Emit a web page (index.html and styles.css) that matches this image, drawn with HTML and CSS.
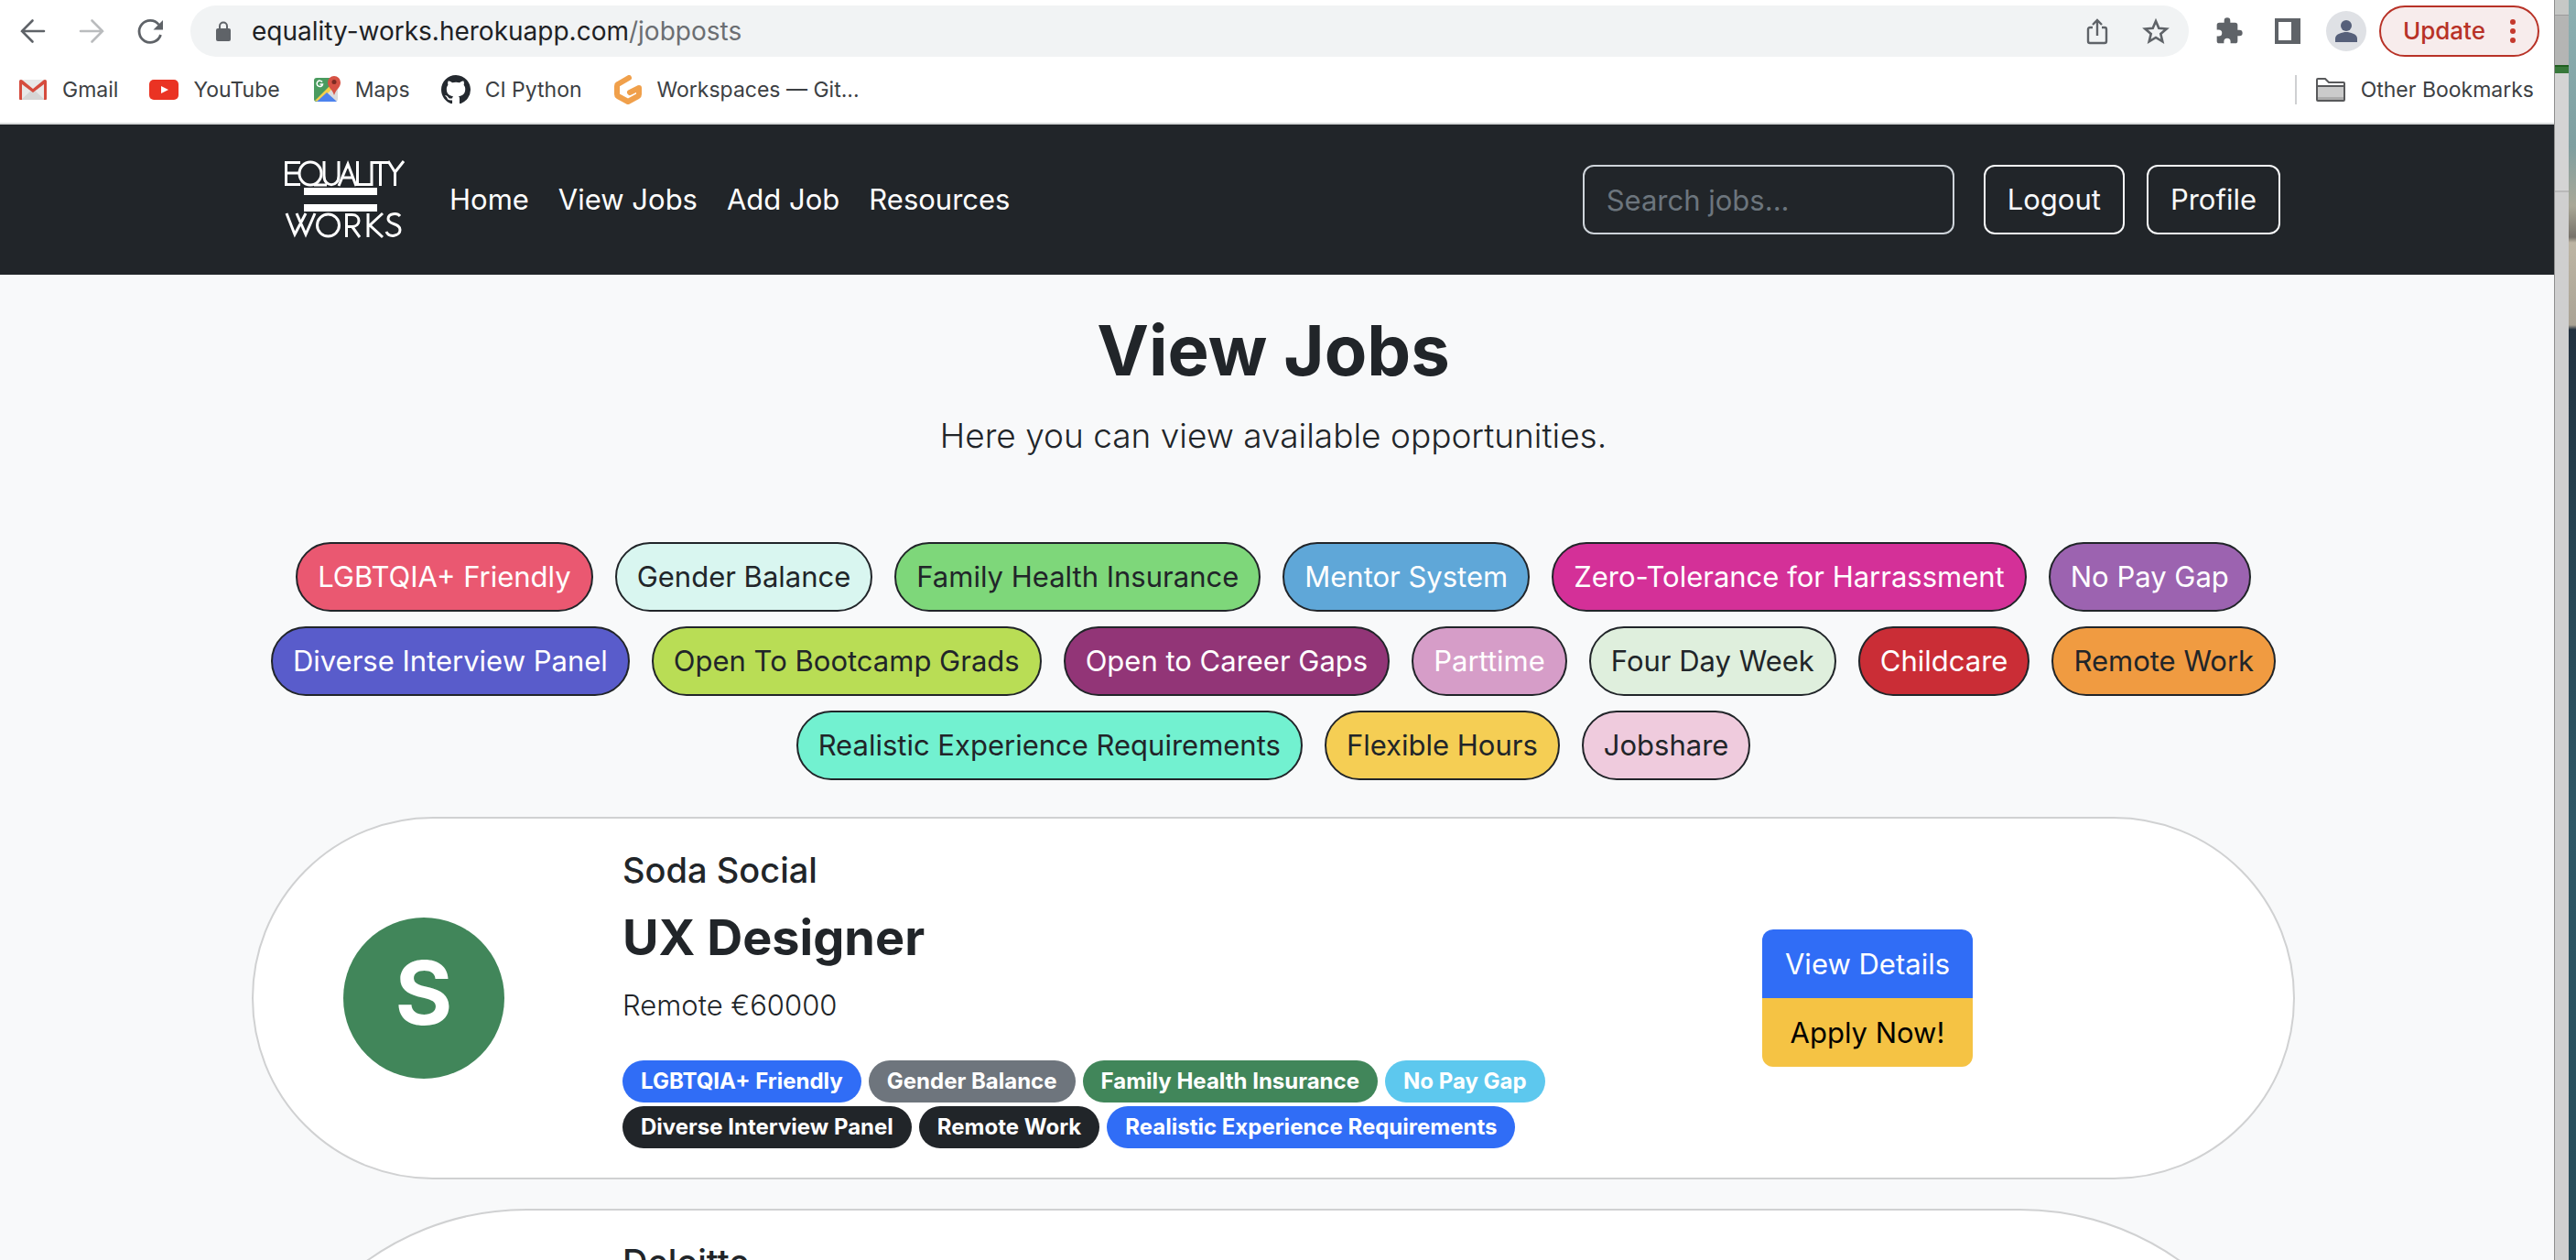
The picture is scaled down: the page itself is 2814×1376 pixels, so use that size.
FILE: index.html
```html
<!DOCTYPE html>
<html lang="en">
<head>
<meta charset="utf-8">
<title>Equality Works</title>
<link rel="stylesheet" href="styles.css">
</head>
<body>
<div class="desktop">
<div class="window">
  <div class="browser">
    <div class="toolbar">
      <div class="history">
        <button class="tool" aria-label="Back"><svg width="32" height="32" viewBox="0 0 32 32" fill="none" stroke="#5f6368" stroke-width="2.600" stroke-linecap="round"><path d="M28 16H4M15.500 4.500 4 16l11.500 11.500"/></svg></button>
        <button class="tool" aria-label="Forward"><svg width="32" height="32" viewBox="0 0 32 32" fill="none" stroke="#babcbe" stroke-width="2.600" stroke-linecap="round"><path d="M4 16h24M16.500 4.500 28 16 16.500 27.500"/></svg></button>
        <button class="tool" aria-label="Reload"><svg width="32" height="32" viewBox="0 0 32 32"><path d="M25.500 9a12 12 0 1 0 2 11" fill="none" stroke="#5f6368" stroke-width="2.800"/><path d="M30 4v10.500H19.500z" fill="#5f6368"/></svg></button>
      </div>
      <div class="address">
        <svg width="18" height="22" viewBox="0 0 18 22"><path d="M5 9V5.500a4 4 0 0 1 8 0V9" fill="none" stroke="#5f6368" stroke-width="2"/><rect y="8" x="1" width="16" height="14" rx="2" fill="#5f6368"/></svg>
        <span class="url">equality-works.herokuapp.com<span class="path">/jobposts</span></span>
        <button class="tool" aria-label="Share"><svg width="28" height="32" viewBox="0 0 28 32" fill="none" stroke="#5f6368" stroke-width="2.400"><path d="M9 12H6a2 2 0 0 0-2 2v13a2 2 0 0 0 2 2h16a2 2 0 0 0 2-2V14a2 2 0 0 0-2-2h-3M14 21V4M9 9l5-5 5 5"/></svg></button>
        <button class="tool" aria-label="Bookmark this page"><svg width="32" height="32" viewBox="0 0 32 32" fill="none" stroke="#5f6368" stroke-width="2.600"><path d="m16 5 3.300 7.800 8.400.700-6.400 5.500 2 8.300L16 22.900l-7.300 4.400 2-8.300-6.400-5.500 8.400-.700z"/></svg></button>
      </div>
      <button class="tool" aria-label="Extensions"><svg width="32" height="32" viewBox="0 0 24 24" fill="#5f6368"><path d="M20.500 11H19V7a2 2 0 0 0-2-2h-4V3.500a2.500 2.500 0 0 0-5 0V5H4a2 2 0 0 0-2 2v3.800h1.500a2.700 2.700 0 0 1 0 5.400H2V20a2 2 0 0 0 2 2h3.800v-1.500a2.700 2.700 0 0 1 5.400 0V22H17a2 2 0 0 0 2-2v-4h1.500a2.500 2.500 0 0 0 0-5z"/></svg></button>
      <button class="tool" aria-label="Side panel"><svg width="34" height="28" viewBox="-6 0 34 28"><path d="M0 0h28v28H0zM4 4v20h14V4z" fill="#5f6368" fill-rule="evenodd"/></svg></button>
      <button class="tool" aria-label="Account"><svg width="44" height="44" viewBox="0 0 44 44"><circle cx="22" cy="22" r="22" fill="#dfe1e5"/><circle cx="22" cy="16" r="6" fill="#56607a"/><path d="M10 34v-4c0-5 8-7 12-7s12 2 12 7v4z" fill="#56607a"/></svg></button>
      <button class="update">Update<svg width="6" height="28" viewBox="0 0 6 28" fill="#c5392d"><circle cx="3" cy="4" r="3"/><circle cx="3" cy="14" r="3"/><circle cx="3" cy="24" r="3"/></svg></button>
    </div>
    <div class="bookmarks">
      <a href="#"><svg width="32" height="32" viewBox="0 0 32 32"><rect x="1" y="5" width="30" height="22" rx="2" fill="#e8e8e8"/><path d="m3 27 13-12 13 12" fill="#d5d5d5"/><path d="M1 7v19a1 1 0 0 0 1 1h2V10l12 9 12-9v17h2a1 1 0 0 0 1-1V7c0-2-2-3-4-1L16 15 5 6C3 4 1 5 1 7z" fill="#d54b3d"/></svg>Gmail</a>
      <a href="#"><svg width="32" height="32" viewBox="0 0 32 32"><rect y="5" width="32" height="22" rx="5" fill="#ea3323"/><path d="m13 12 8 4-8 4z" fill="#fff"/></svg>YouTube</a>
      <a href="#"><svg width="32" height="32" viewBox="0 0 32 32"><rect x="3" y="4" width="26" height="25" rx="3" fill="#dcdcdc"/><path d="M3 26V6a3 3 0 0 1 3-3h16l1 8L6 29a3 3 0 0 1-3-3z" fill="#4a9b5f"/><path d="m4 28 18-18 3 3L9 29z" fill="#f5d04c"/><path d="m6 29 11-10 11 10z" fill="#4c82ee"/><path d="M25 1a7 7 0 0 0-7 7c0 6 5 7 7 14 2-7 7-8 7-14a7 7 0 0 0-7-7z" fill="#d65244"/><circle cx="25" cy="7.500" r="2.500" fill="#7c2b22"/><path d="M12 7.500a3.200 3.200 0 1 0 .500 2.500H9.500" fill="none" stroke="#fff" stroke-width="1.500"/></svg>Maps</a>
      <a href="#"><svg width="32" height="32" viewBox="0 0 16 16" fill="#24292f"><path d="M8 0C3.580 0 0 3.580 0 8c0 3.540 2.290 6.530 5.470 7.590.4.070.55-.17.55-.38 0-.19-.01-.82-.01-1.490-2.010.37-2.530-.49-2.690-.94-.09-.23-.48-.94-.82-1.130-.28-.15-.68-.52-.01-.53.63-.01 1.080.58 1.230.82.72 1.210 1.870.87 2.330.66.07-.52.28-.87.51-1.070-1.780-.2-3.640-.89-3.640-3.950 0-.87.31-1.590.82-2.150-.08-.2-.36-1.020.08-2.120 0 0 .67-.21 2.200.82.64-.18 1.320-.27 2-.27s1.360.09 2 .27c1.530-1.040 2.200-.82 2.200-.82.44 1.100.16 1.920.08 2.120.51.56.82 1.270.82 2.150 0 3.070-1.870 3.750-3.650 3.950.29.25.54.73.54 1.480 0 1.070-.01 1.930-.01 2.200 0 .21.15.46.55.38A8.010 8.010 0 0 0 16 8c0-4.420-3.580-8-8-8z"/></svg>CI Python</a>
      <a href="#"><svg width="32" height="32" viewBox="0 0 32 32" fill="none" stroke="#f0a04b" stroke-width="6" stroke-linecap="round" stroke-linejoin="round"><path d="M17 3 5 10c-1 .500-1 1-1 2v9c0 1 0 1.500 1 2l11 6 11-6c1-.500 1-1 1-2v-7l-10 5"/></svg>Workspaces — Git...</a>
      <a href="#" class="other"><svg width="34" height="28" viewBox="0 0 34 28"><path d="M2 25V3a1 1 0 0 1 1-1h8l4 4h16a1 1 0 0 1 1 1v18a1 1 0 0 1-1 1H3a1 1 0 0 1-1-1z" fill="#fff"/><path d="M2 10h30v12H2z" fill="#cbcbcb"/><path d="M2 22h30v4H2z" fill="#acacac"/><path d="M2 25V3a1 1 0 0 1 1-1h8l4 4h16a1 1 0 0 1 1 1v18a1 1 0 0 1-1 1H3a1 1 0 0 1-1-1zM2 10h30" fill="none" stroke="#58595b" stroke-width="2"/></svg>Other Bookmarks</a>
    </div>
  </div>

  <div class="page">
    <header class="navbar">
      <div class="container nav-row">
        <a href="#" class="brand" aria-label="Equality Works"><svg width="136" height="88" viewBox="0 0 136 88" fill="none" stroke="#fff" stroke-width="3"><path d="M21 3.500H5.500v24H21M6 15h14M36 28h14M47 2v16c0 13 16 13 16 0V2M63 29 73 5l9 24M66 20h13M83.500 2v25.500H99V3.500h18M108.500 4v25M117 2l7.500 12v15M134 2l-9.500 12"/><ellipse cx="32" cy="15.500" rx="12" ry="12.500"/><path d="M6 59l9 23 12-23M17 59l10 23 10-23M71.500 85V60.500h6c10 0 10 13 0 13h-6M78 74l8 11M95 59v26M111 59 97 72l14 13M130 62c-3-4-13-3-13 3 0 7 13 4 13 12 0 7-12 9-15 2"/><ellipse cx="51.500" cy="72" rx="12" ry="12"/><path d="M25 35h80M25 53h80" stroke-width="8"/></svg></a>
        <nav class="links"><a href="#">Home</a><a href="#">View Jobs</a><a href="#">Add Job</a><a href="#">Resources</a></nav>
        <input class="search" type="search" placeholder="Search jobs..." aria-label="Search jobs">
        <button class="outline">Logout</button>
        <button class="outline">Profile</button>
      </div>
    </header>
    <main>
      <div class="container">
      <h1>View Jobs</h1>
      <p class="lead">Here you can view available opportunities.</p>
      <div class="filters">
        <a href="#" class="pill light red">LGBTQIA+ Friendly</a>
        <a href="#" class="pill mint">Gender Balance</a>
        <a href="#" class="pill green">Family Health Insurance</a>
        <a href="#" class="pill light blue">Mentor System</a>
        <a href="#" class="pill light magenta">Zero-Tolerance for Harrassment</a>
        <a href="#" class="pill light purple">No Pay Gap</a>
        <a href="#" class="pill light indigo">Diverse Interview Panel</a>
        <a href="#" class="pill lime">Open To Bootcamp Grads</a>
        <a href="#" class="pill light plum">Open to Career Gaps</a>
        <a href="#" class="pill light orchid">Parttime</a>
        <a href="#" class="pill pale">Four Day Week</a>
        <a href="#" class="pill light crimson">Childcare</a>
        <a href="#" class="pill orange">Remote Work</a>
        <a href="#" class="pill aqua">Realistic Experience Requirements</a>
        <a href="#" class="pill yellow">Flexible Hours</a>
        <a href="#" class="pill pink">Jobshare</a>
      </div>
      <article class="card">
        <div class="avatar">S</div>
        <div class="info">
          <h2 class="company">Soda Social</h2>
          <h3 class="role">UX Designer</h3>
          <p class="terms">Remote €60000</p>
          <div class="badges">
            <span class="badge primary">LGBTQIA+ Friendly</span>
            <span class="badge secondary">Gender Balance</span>
            <span class="badge success">Family Health Insurance</span>
            <span class="badge info-tag">No Pay Gap</span>
            <span class="badge dark">Diverse Interview Panel</span>
            <span class="badge dark">Remote Work</span>
            <span class="badge primary">Realistic Experience Requirements</span>
          </div>
        </div>
        <div class="actions"><button class="details">View Details</button><button class="apply">Apply Now!</button></div>
      </article>
      <article class="card tall">
        <div class="info"><h2 class="company">Deloitte</h2></div>
      </article>
      </div>
    </main>
  </div>
</div>
<div class="behind"></div>
<div class="wallpaper"></div>
</div>
</body>
</html>
```
FILE: styles.css
```css
* { box-sizing: border-box; }
body { margin: 0; font-family: Inter, "Liberation Sans", sans-serif; font-size: 31px; line-height: 48px; color: #212529; }
button, input { font: inherit; color: inherit; margin: 0; }
a { color: inherit; text-decoration: none; }
h1, h2, h3, p { margin: 0; }
svg { display: block; flex: none; }

.desktop { display: flex; height: 100vh; overflow: hidden; }
.window { flex: 1; min-width: 0; display: flex; flex-direction: column; }
.behind { width: 16px; border-left: 1px solid #8e8e8e; background: linear-gradient(#c6c8c6 0 16px, #9b9b9b 16px 17px, #b4b5b4 17px 71px, #1f5f20 71px 73px, #37783a 73px 80px, #d4d4d4 80px 208px, #b9b9b9 208px 210px, #cfcfcf 210px); }
.wallpaper { width: 8px; background: linear-gradient(#8cb0b2 0, #7f9fa0 160px, #a9a797 225px, #77726a 259px, #bdb5a4 265px, #aaa395 355px, #22313f 360px, #26414f 560px, #2f5866 900px, #264b58 100%); }

.browser { background: #fff; border-bottom: 2px solid #dadcdc; }
.toolbar { display: flex; align-items: center; gap: 28px; height: 68px; padding: 0 16px 0 20px; }
.history { display: flex; gap: 32px; }
.tool { display: grid; place-items: center; padding: 0; border: 0; background: none; }
.address { flex: 1; display: flex; align-items: center; height: 56px; border-radius: 28px; background: #f1f3f4; padding: 0 20px 0 27px; }
.address .tool { margin-left: 34px; }
.url { flex: 1; margin-left: 22px; font-size: 28px; color: #202124; }
.path { color: #6b6e72; }
.update { display: flex; align-items: center; gap: 27px; height: 56px; margin-left: -14px; padding: 0 24px; border: 2px solid #b83227; border-radius: 28px; background: #f7ecec; color: #b83227; font-size: 26px; font-weight: 500; }
.bookmarks { display: flex; align-items: center; gap: 34px; height: 66px; padding: 0 22px 6px 20px; font-size: 23px; color: #3c4043; }
.bookmarks a { display: flex; align-items: center; gap: 16px; }
.bookmarks .other { margin-left: auto; padding-left: 20px; border-left: 2px solid #cfd0d2; line-height: 32px; }

.page { flex: 1; min-height: 0; overflow: hidden; background: #f8f9fa; }
.container { max-width: 2232px; margin: 0 auto; }
.navbar { background: #212529; color: #fff; padding-right: 8px; }
.nav-row { display: flex; align-items: center; height: 164px; padding: 0 16px; }
.brand { margin-left: 16px; }
.links { display: flex; gap: 32px; margin: 0 auto 0 48px; }
.search { width: 406px; height: 76px; padding: 12px 24px; border: 2px solid #ced4da; border-radius: 12px; background: none; }
.search::placeholder { color: #6c757d; opacity: 1; }
.outline { height: 76px; padding: 0 24px; border: 2px solid #f8f9fa; border-radius: 12px; background: none; color: #f8f9fa; margin-left: 24px; }
.search + .outline { margin-left: 32px; }

main { padding: 34px 8px 0 0; }
h1 { text-align: center; font-size: 76px; line-height: 96px; font-weight: 700; }
.lead { margin-top: 16px; text-align: center; font-size: 37px; line-height: 60px; font-weight: 300; }
.filters { display: flex; flex-wrap: wrap; justify-content: center; gap: 16px 24px; margin: 86px 0 40px; }
.pill { height: 76px; padding: 12px 22px; border: 2px solid #212529; border-radius: 38px; }
.light { color: #fff; }
.red { background: #ea5871; }
.mint { background: #d9f6f0; }
.green { background: #7ed77a; }
.blue { background: #5fa7d8; }
.magenta { background: #d43098; }
.purple { background: #9c63b0; }
.indigo { background: #595ccb; }
.lime { background: #b9dd55; }
.plum { background: #923577; }
.orchid { background: #d69dc8; }
.pale { background: #dfefdd; }
.crimson { background: #ca2d36; }
.orange { background: #f09b41; }
.aqua { background: #72f1d0; }
.yellow { background: #f5ce54; }
.pink { background: #efcbdd; }

.card { display: grid; grid-template-columns: 302px 1fr 580px; gap: 0 101px; align-items: center; min-height: 394px; margin-bottom: 32px; padding: 32px 0; border: 2px solid #d0d1d2; border-radius: 600px; background: #fff; }
.avatar { justify-self: end; width: 176px; height: 176px; margin-right: 28px; border-radius: 50%; background: #41865a; color: #fff; font-size: 96px; line-height: 164px; font-weight: 700; text-align: center; }
.company { font-size: 38px; line-height: 48px; font-weight: 500; }
.role { margin-top: 16px; font-size: 54px; line-height: 68px; font-weight: 700; }
.terms { margin-top: 16px; font-weight: 300; }
.badges { display: flex; flex-wrap: wrap; gap: 4px 8px; max-width: 1030px; margin-top: 36px; }
.badge { height: 46px; padding: 0 20px; border-radius: 23px; color: #fff; font-size: 24px; line-height: 45px; font-weight: 700; }
.primary { background: #306df6; }
.secondary { background: #6e757d; }
.success { background: #41865a; }
.info-tag { background: #5dc8ee; }
.dark { background: #212529; }
.actions { display: flex; flex-direction: column; width: 230px; }
.actions button { height: 75px; border: 0; padding: 0; }
.details { border-radius: 12px 12px 0 0; background: #306df6; color: #fff; }
.apply { border-radius: 0 0 12px 12px; background: #f5c344; color: #000; }
.tall { min-height: 600px; align-items: start; }
.tall .info { grid-column: 2; }
```
